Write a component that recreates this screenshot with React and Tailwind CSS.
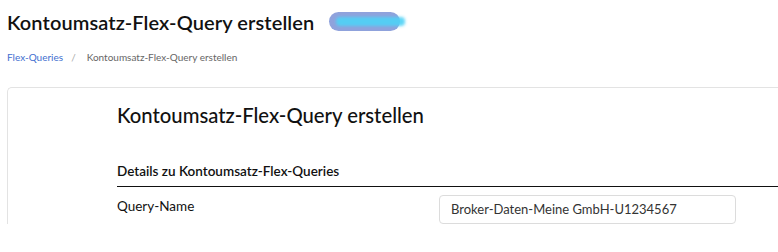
export default function App() {
  return (
    <div className="w-[778px] h-[252px] overflow-hidden bg-white text-[#111]" style={{ fontFamily: '"Lato", "Open Sans", sans-serif' }}>
      <div className="flex items-center gap-[15px] pl-[7px] pt-[7px] h-[36px]">
        <h1 className="text-[20px] leading-[26px] font-semibold tracking-[0.1px]">Kontoumsatz-Flex-Query erstellen</h1>
        <span className="relative inline-block w-[71px] h-[19px] rounded-full bg-[#8fa2dc]">
          <span className="absolute left-[7px] right-[-5px] top-[5px] h-[9px] rounded-sm bg-[#4fd2f6] blur-[1.5px] opacity-90" />
        </span>
      </div>

      <nav className="flex items-center pl-[7px] pt-[14px] text-[10px] leading-[14px]">
        <span className="text-[#3f6fd0]">Flex-Queries</span>
        <span className="text-[#aaa] mx-[8px]">/</span>
        <span className="text-[#666] ml-[3px]">Kontoumsatz-Flex-Query erstellen</span>
      </nav>

      <div className="ml-[7px] mt-[23px] border border-[#e3e3e3] border-r-0 border-b-0 rounded-tl-[5px] pl-[109px] pt-[14px]">
        <h2 className="text-[20.3px] leading-[26px] font-medium">Kontoumsatz-Flex-Query erstellen</h2>
        <h3 className="mt-[34px] text-[13.5px] leading-[18px] font-semibold pb-[6px] border-b-[1.5px] border-[#111]">Details zu Kontoumsatz-Flex-Queries</h3>
        <div className="flex items-start pt-[8px]">
          <label className="w-[322px] text-[13.5px] leading-[20px] pt-[1px] font-normal">Query-Name</label>
          <div className="w-[297px] h-[29px] border border-[#dcdcdc] rounded-[4px] px-[11px] flex items-center text-[13px] text-[#333]">
            Broker-Daten-Meine GmbH-U1234567
          </div>
        </div>
      </div>
    </div>
  );
}
